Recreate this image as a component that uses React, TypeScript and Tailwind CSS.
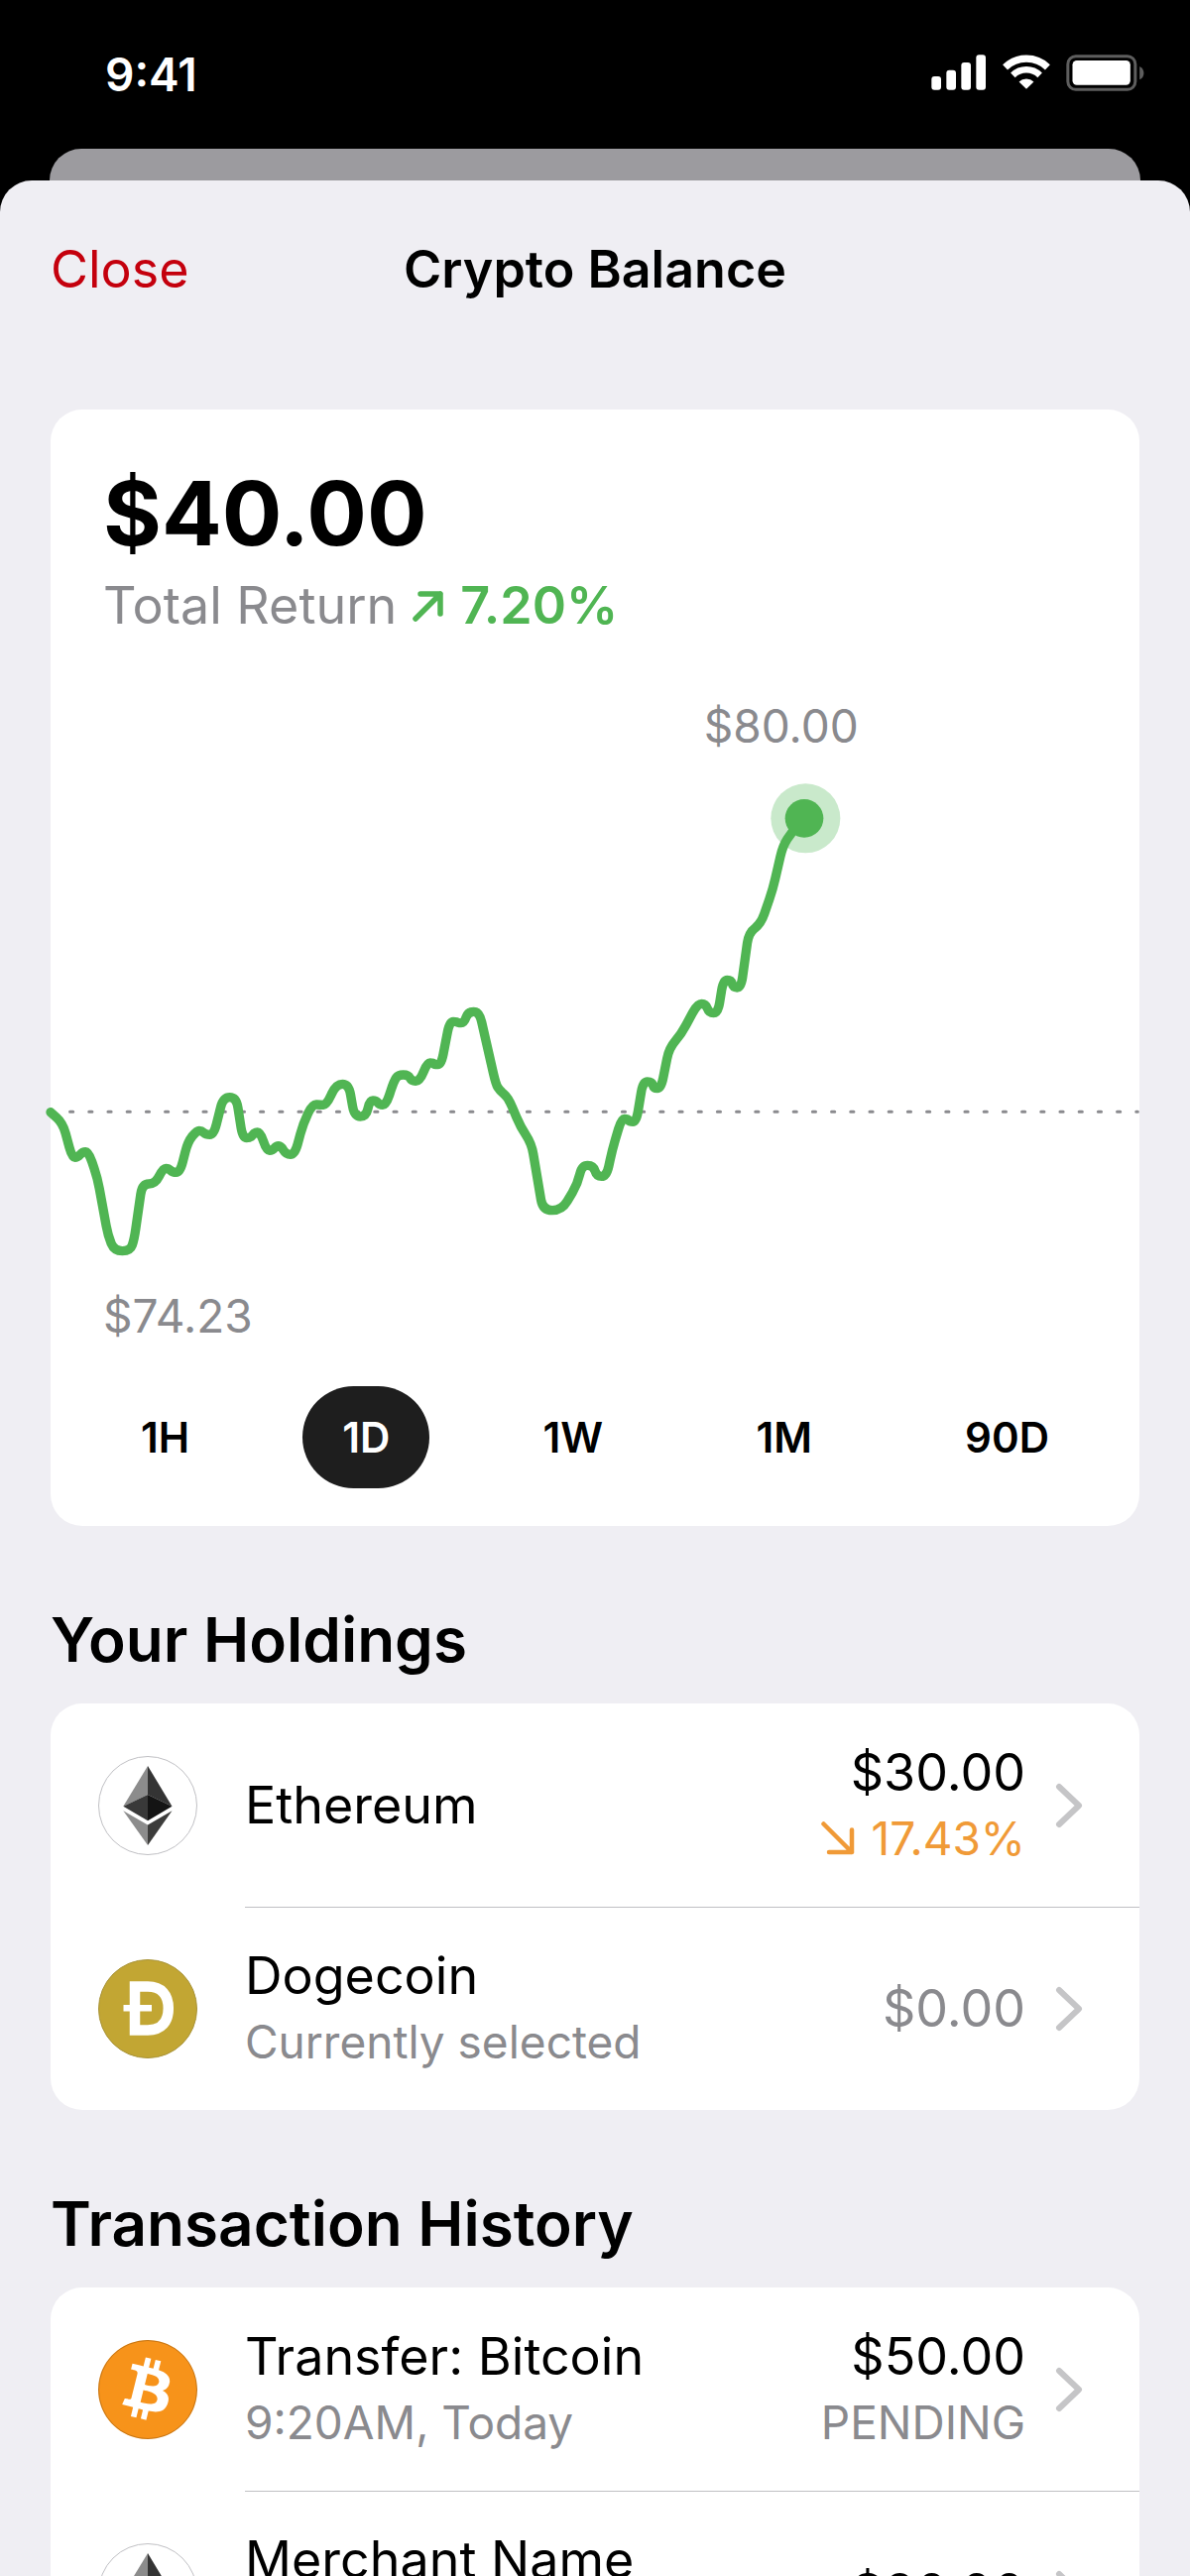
import { useState, type ReactNode } from "react";
import { SiBitcoin } from "react-icons/si";

type Point = [number, number];
type Coin = "ethereum" | "dogecoin" | "bitcoin";

type Row = {
  id: number;
  coin: Coin;
  title: string;
  subtitle?: string;
  amount: string;
  muted?: boolean;
  change?: string;
  status?: string;
};

const ranges = ["1H", "1D", "1W", "1M", "90D"];

const holdings: Row[] = [
  { id: 1, coin: "ethereum", title: "Ethereum", amount: "$30.00", change: "17.43%" },
  { id: 2, coin: "dogecoin", title: "Dogecoin", subtitle: "Currently selected", amount: "$0.00", muted: true },
];

const transactions: Row[] = [
  { id: 1, coin: "bitcoin", title: "Transfer: Bitcoin", subtitle: "9:20AM, Today", amount: "$50.00", status: "PENDING" },
  { id: 2, coin: "ethereum", title: "Merchant Name", subtitle: "9:20AM, Today", amount: "$20.00" },
];

const pricePoints: Point[] = [
  [33, 485], [70, 518], [98, 622], [115, 622], [130, 605], [148, 605], [175, 685], [207, 860],
  [226, 905], [274, 905], [286, 870], [310, 702], [350, 702], [373, 655], [390, 655], [402, 667],
  [425, 667], [448, 575], [475, 541], [490, 541], [503, 553], [527, 553], [555, 440], [595, 440],
  [614, 563], [638, 563], [650, 546], [668, 546], [686, 601], [704, 601], [716, 587], [730, 587],
  [745, 613], [772, 613], [797, 520], [825, 461], [850, 463], [868, 463], [897, 400], [935, 400],
  [952, 498], [988, 498], [998, 450], [1018, 450], [1028, 463], [1048, 463], [1072, 390], [1085, 372],
  [1115, 372], [1125, 391], [1150, 391], [1172, 336], [1190, 336], [1195, 341], [1215, 341], [1240, 211],
  [1262, 211], [1266, 215], [1284, 215], [1296, 181], [1330, 181], [1380, 400], [1392, 420], [1417, 440],
  [1455, 530], [1488, 580], [1522, 782], [1580, 782], [1628, 700], [1640, 646], [1675, 646], [1685, 679],
  [1715, 679], [1732, 600], [1760, 505], [1778, 505], [1785, 514], [1805, 514], [1825, 393], [1852, 393],
  [1858, 413], [1880, 413], [1904, 292], [1940, 250], [1990, 157], [2015, 157], [2025, 185], [2052, 185],
  [2068, 85], [2092, 85], [2098, 108], [2122, 108], [2145, -58], [2182, -85], [2218, -190], [2248, -320],
  [2275, -362], [2313, -404],
];

// joins the points with straight lines and rounds every corner
function roundedPath(points: Point[], radius: number) {
  let d = `M${points[0][0]} ${points[0][1]}`;
  for (let i = 1; i < points.length - 1; i++) {
    const [x, y] = points[i];
    const towards = ([px, py]: Point) => {
      const length = Math.hypot(px - x, py - y);
      const t = Math.min(radius, length / 2) / length;
      return `${x + (px - x) * t} ${y + (py - y) * t}`;
    };
    d += ` L${towards(points[i - 1])} Q${x} ${y} ${towards(points[i + 1])}`;
  }
  const last = points[points.length - 1];
  return `${d} L${last[0]} ${last[1]}`;
}

function StatusBar() {
  return (
    <div className="flex h-[150px] items-center justify-between pl-[106px] pr-[46px] text-white">
      <span className="text-[46px] leading-none font-semibold">9:41</span>
      <div className="flex items-center gap-4 pb-1">
        <svg viewBox="118 77 168 106" className="h-9 w-14" fill="currentColor" aria-hidden="true">
          <rect x="119" y="142" width="29" height="41" rx="9" />
          <rect x="164" y="123" width="29" height="60" rx="9" />
          <rect x="209" y="100" width="29" height="83" rx="9" />
          <rect x="254" y="77" width="29" height="106" rx="9" />
        </svg>
        <svg viewBox="330 75 148 108" className="h-9 w-12" fill="none" stroke="currentColor" aria-hidden="true">
          <path d="M338 113A95 95 0 0 1 470 113" strokeWidth="22" />
          <path d="M362 138A60 60 0 0 1 446 138" strokeWidth="20" />
          <path d="M381 158A33 33 0 0 1 427 158L404 181Z" fill="currentColor" stroke="none" />
        </svg>
        <svg viewBox="525 75 236 111" className="h-[37px] w-[79px]" aria-hidden="true">
          <rect x="530" y="80" width="204" height="101" rx="24" fill="none" stroke="#5e5e5e" strokeWidth="9" />
          <rect x="544" y="93" width="175" height="74" rx="13" fill="#fff" />
          <path d="M747 111C764 118 764 144 747 151Z" fill="#5e5e5e" />
        </svg>
      </div>
    </div>
  );
}

function PriceChart() {
  return (
    <div className="relative mt-9">
      <svg viewBox="33 -840 3294 2031" className="block w-full overflow-visible" role="img" aria-label="Balance over the last day">
        <line x1="34" y1="484" x2="3322" y2="484" stroke="#8a8a8e" strokeWidth="9" strokeLinecap="round" strokeDasharray="9.6 48" />
        <circle cx="2317" cy="-404" r="105" fill="#c9e9cb" />
        <path
          d={roundedPath(pricePoints, 32)}
          fill="none"
          stroke="#50b553"
          strokeWidth="28"
          strokeLinecap="round"
          strokeLinejoin="round"
        />
        <circle cx="2313" cy="-404" r="58" fill="#50b553" />
      </svg>
      <span className="absolute top-[22px] left-[60%] text-[46px] leading-[60px] text-[#8a8a8e]">$80.00</span>
      <span className="absolute bottom-0 left-[53px] text-[46px] leading-[60px] text-[#8a8a8e]">$74.23</span>
    </div>
  );
}

function CoinIcon({ coin }: { coin: Coin }) {
  if (coin === "bitcoin") {
    return (
      <span className="relative size-[100px] shrink-0 rounded-full bg-white">
        <SiBitcoin className="size-full text-[#f7931a]" aria-hidden="true" />
        <span className="absolute inset-0 rounded-full border border-black/20" />
      </span>
    );
  }

  if (coin === "dogecoin") {
    return (
      <svg viewBox="0 0 100 100" className="size-[100px] shrink-0" aria-hidden="true">
        <circle cx="50" cy="50" r="49.5" fill="#c2a633" stroke="#a89339" />
        <path d="M37 27.500H50C64 27.500 70.800 36 70.800 49.500C70.800 63 64 71.500 50 71.500H37Z" fill="none" stroke="#fff" strokeWidth="10.500" />
        <path d="M25.500 46H54V52.500H25.500Z" fill="#fff" />
      </svg>
    );
  }

  return (
    <svg viewBox="0 0 100 100" className="size-[100px] shrink-0" aria-hidden="true">
      <circle cx="50" cy="50" r="49.5" fill="#fff" stroke="#c0c0c4" />
      <path d="M50 10L25.300 50.700L50 39Z" fill="#8c8c8c" />
      <path d="M50 10L74.500 50.700L50 39Z" fill="#343434" />
      <path d="M25.300 50.700L50 39V65.300Z" fill="#393939" />
      <path d="M74.500 50.700L50 39V65.300Z" fill="#141414" />
      <path d="M25.300 55.300L50 69.500V90Z" fill="#8c8c8c" />
      <path d="M74.500 55.300L50 69.500V90Z" fill="#3c3c3b" />
    </svg>
  );
}

function ListRow({ row, last }: { row: Row; last: boolean }) {
  return (
    <li>
      <a href="#" className="flex items-center gap-12 pl-12">
        <CoinIcon coin={row.coin} />
        <div className={`flex flex-1 items-center pr-[57px] ${last ? "h-[204px]" : "h-[206px] border-b border-[#c0c0c4]"}`}>
          <div className="flex-1">
            <div className="text-[52px] leading-[66px]">{row.title}</div>
            {row.subtitle && <div className="text-[46px] leading-[66px] text-[#8a8a8e]">{row.subtitle}</div>}
          </div>
          <div className="mr-[30px] text-right">
            <div className={`text-[52px] leading-[66px] ${row.muted ? "text-[#8a8a8e]" : ""}`}>{row.amount}</div>
            {row.change && (
              <div className="flex items-center justify-end gap-4 text-[46px] leading-[66px] text-[#f09a37]">
                <svg viewBox="0 0 34 34" className="size-[34px]" fill="none" stroke="currentColor" strokeWidth="4.500" strokeLinecap="round" strokeLinejoin="round" aria-hidden="true">
                  <path d="M2.500 2.500L31 31M31 8.500V31H8" />
                </svg>
                {row.change}
              </div>
            )}
            {row.status && <div className="text-[46px] leading-[66px] text-[#8a8a8e]">{row.status}</div>}
          </div>
          <svg viewBox="0 0 28 46" className="h-[46px] w-7 shrink-0" fill="none" stroke="#c5c5c7" strokeWidth="6" strokeLinecap="round" strokeLinejoin="round" aria-hidden="true">
            <path d="M4 4L24 23L4 42" />
          </svg>
        </div>
      </a>
    </li>
  );
}

function Section({ title, children }: { title: string; children: ReactNode }) {
  return (
    <section className="pt-[75px]">
      <h2 className="mb-6 text-[62px] leading-[80px] font-semibold">{title}</h2>
      <ul className="overflow-hidden rounded-[32px] bg-white">{children}</ul>
    </section>
  );
}

export default function App() {
  const [range, setRange] = useState("1D");

  return (
    <div className="flex h-screen flex-col overflow-hidden bg-black font-['Inter',sans-serif] text-black">
      <StatusBar />
      <div className="mx-[50px] h-8 shrink-0 rounded-t-[32px] bg-[#9c9b9f]" />

      {/* the corners of the sheet let the black backdrop through */}
      <main className="min-h-0 flex-1 overflow-hidden rounded-t-[32px] bg-[#efeef3] px-[51px]">
        <header className="grid h-[180px] grid-cols-[1fr_auto_1fr] items-center text-[52px] leading-[66px]">
          <button type="button" className="justify-self-start text-[#c4000d]">Close</button>
          <h1 className="font-semibold">Crypto Balance</h1>
        </header>

        <section className="mt-[51px] rounded-[32px] bg-white pt-[57px] pb-[38px]">
          <div className="px-[53px]">
            <p className="text-[90px] leading-[96px] font-bold">$40.00</p>
            <p className="mt-3 flex items-center gap-4 text-[52px] leading-[66px] text-[#8a8a8e]">
              Total Return
              <span className="flex items-center gap-4 font-semibold text-[#50b553]">
                <svg viewBox="0 0 32 32" className="size-8" fill="none" stroke="currentColor" strokeWidth="5.500" strokeLinecap="round" strokeLinejoin="round" aria-hidden="true">
                  <path d="M3 29L28 4M8 4H28V24" />
                </svg>
                7.20%
              </span>
            </p>
          </div>

          <PriceChart />

          <div className="mt-[41px] flex justify-between px-[51px]">
            {ranges.map((item) => (
              <button
                key={item}
                type="button"
                aria-pressed={item === range}
                onClick={() => setRange(item)}
                className={`h-[103px] rounded-full px-10 text-[42px] leading-none font-semibold ${item === range ? "bg-[#1e1e1e] text-white" : ""}`}
              >
                {item}
              </button>
            ))}
          </div>
        </section>

        <Section title="Your Holdings">
          {holdings.map((row, i) => (
            <ListRow key={row.id} row={row} last={i === holdings.length - 1} />
          ))}
        </Section>

        <Section title="Transaction History">
          {transactions.map((row, i) => (
            <ListRow key={row.id} row={row} last={i === transactions.length - 1} />
          ))}
        </Section>
      </main>
    </div>
  );
}
